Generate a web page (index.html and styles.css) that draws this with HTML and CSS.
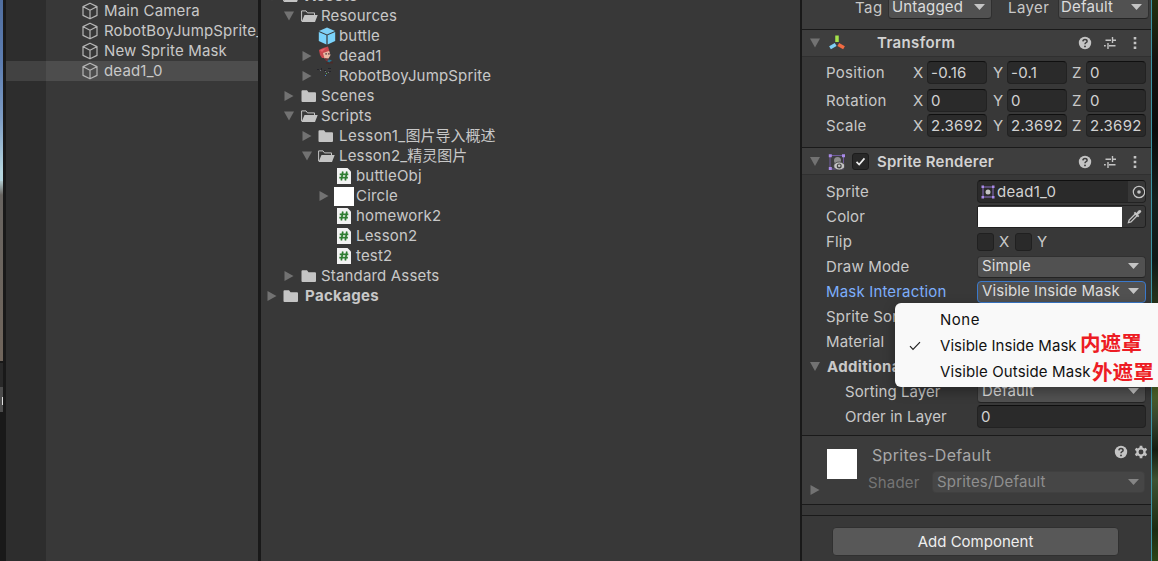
FILE: index.html
```html
<!DOCTYPE html>
<html lang="zh-CN">
<head>
<meta charset="utf-8">
<title>Unity Editor</title>
<link rel="stylesheet" href="styles.css">
</head>
<body>
<svg class="defs" aria-hidden="true">
  <symbol id="cube" viewBox="0 0 18 18"><path d="M9 1.2 16 4.6V13.4L9 16.8 2 13.4V4.6ZM2.3 4.8 9 8.2 15.7 4.8M9 8.2V16.6" fill="none" stroke="#b5b5b5" stroke-width="1.2" stroke-linejoin="round"/></symbol>
  <symbol id="prefab" viewBox="0 0 18 18"><path d="M9 .6 17 4 9 7.4 1 4Z" fill="#7fd0f5"/><path d="M.8 5.1 8.4 8.3V17.6L.8 14Z" fill="#7bd3fb"/><path d="M17.2 5.1 9.6 8.3V17.6L17.2 14Z" fill="#7bd3fb"/></symbol>
  <symbol id="folder" viewBox="0 0 18 16"><path d="M1.5 3.2q0-1 1-1H7l1.5 2h6.5q1 0 1 1V13q0 1-1 1H2.500q-1 0-1-1Z" fill="#c4c4c4"/></symbol>
  <symbol id="open" viewBox="0 0 18 16"><path d="M1.600 13V2.900H6l1.500 2h7V7" fill="none" stroke="#c4c4c4" stroke-width="1"/><path d="M4.500 7H17.700L15 14H1.500Z" fill="#c4c4c4"/></symbol>
  <symbol id="script" viewBox="0 0 16 18"><path d="M1 1H11.500L15 4.500V17H1Z" fill="#f2f2f2"/><path d="M6.800 4.500 5.300 13.500M10.800 4.500 9.300 13.500M3.700 7.300H12.300M3.300 10.700H11.900" stroke="#2f7d32" stroke-width="1.700" fill="none"/></symbol>
  <symbol id="help" viewBox="0 0 14 14"><circle cx="7" cy="7" r="6.200" fill="#c4c4c4"/><path d="M4.900 5.400Q5 3.500 7 3.500T9.100 5.200Q9.100 6.100 8 6.700 7 7.200 7 8.300" fill="none" stroke="#3e3e3e" stroke-width="1.500"/><circle cx="7" cy="10.400" r=".95" fill="#3e3e3e"/></symbol>
  <symbol id="preset" viewBox="0 0 14 14"><path d="M2.500 4.200H8M10 4.200H13M9.500 1V7M1 9.800H2.800M6 9.800H12.500M5 7V13" stroke="#c4c4c4" stroke-width="1.400" fill="none"/></symbol>
  <symbol id="dots" viewBox="0 0 6 14"><path d="M1.700 1h2.600v2.600H1.700ZM1.700 5.700h2.600v2.600H1.700ZM1.700 10.400h2.600V13H1.700Z" fill="#c4c4c4"/></symbol>
  <symbol id="gear" viewBox="0 0 14 14"><circle cx="7" cy="7" r="3.600" fill="none" stroke="#c4c4c4" stroke-width="2.300"/><path d="M7 .7V3M7 11v2.300M1.500 3.900l2 1.100M10.500 9l2 1.100M1.500 10.100l2-1.100M10.500 5l2-1.100" stroke="#c4c4c4" stroke-width="2.700"/></symbol>
</svg>

<div class="editor">
  <div class="scene-edge"><i class="scene-sky"></i><i class="scene-ground"></i><i class="scene-gap"></i><i class="scene-tab"><b></b></i></div>

  <div class="hierarchy">
    <div class="h-row"><svg><use href="#cube"/></svg>Main Camera</div>
    <div class="h-row"><svg><use href="#cube"/></svg>RobotBoyJumpSprite_0</div>
    <div class="h-row"><svg><use href="#cube"/></svg>New Sprite Mask</div>
    <div class="h-row selected"><svg><use href="#cube"/></svg>dead1_0</div>
  </div>

  <div class="project">
    <div class="row lv0 bold"><i class="arrow down"></i><span class="ico"><svg class="folder"><use href="#open"/></svg></span>Assets</div>
    <div class="row lv1"><i class="arrow down"></i><span class="ico"><svg class="folder"><use href="#open"/></svg></span>Resources</div>
    <div class="row lv2"><i class="arrow none"></i><span class="ico"><svg class="cube"><use href="#prefab"/></svg></span>buttle</div>
    <div class="row lv2"><i class="arrow"></i><span class="ico"><svg class="boy" viewBox="0 0 20 20"><path d="M3 4 7 2 12 .5 14 7 12 12H6L4 9Z" fill="#c9474d"/><path d="M4 4 10 2 6 6Z" fill="#e8606a"/><path d="M7 7 13 5 14.500 9 12.500 12.500H8.500Z" fill="#e9b7a3"/><path d="M9.500 7h1.200v1.800H9.500ZM12.300 7H13.500v1.800h-1.200Z" fill="#50373c"/><path d="M8.500 12 12 13 13 15 10 15Z" fill="#7d3037"/><path d="M12 13.500 15.500 14 15 16.500 11.500 16Z" fill="#29708b"/><path d="M10 16.500h3.500v1.500H10ZM14 15.500h3v2h-3Z" fill="#4a2b28"/></svg></span>dead1</div>
    <div class="row lv2"><i class="arrow"></i><span class="ico"><svg class="boy" viewBox="0 0 20 20"><path d="M1 3h2v1H1ZM5 2h1v2H5ZM8 4h2v1H8ZM12 2h3v1h-3ZM13 5h2v1h-2Z" fill="#24242b"/><path d="M4 4h1v1H4ZM9 5h1v1H9ZM12 6h1v1h-1Z" fill="#777a86"/><path d="M9 9h1v1H9Z" fill="#4f7bd0"/><path d="M10 7h1v1h-1Z" fill="#5cae62"/></svg></span>RobotBoyJumpSprite</div>
    <div class="row lv1"><i class="arrow"></i><span class="ico"><svg class="folder"><use href="#folder"/></svg></span>Scenes</div>
    <div class="row lv1"><i class="arrow down"></i><span class="ico"><svg class="folder"><use href="#open"/></svg></span>Scripts</div>
    <div class="row lv2"><i class="arrow"></i><span class="ico"><svg class="folder"><use href="#folder"/></svg></span><span class="lesson">Lesson1_</span><span class="cjk">图片导入概述</span></div>
    <div class="row lv2"><i class="arrow down"></i><span class="ico"><svg class="folder"><use href="#open"/></svg></span>Lesson2_<span class="cjk">精灵图片</span></div>
    <div class="row lv3"><i class="arrow none"></i><span class="ico"><svg class="script"><use href="#script"/></svg></span>buttleObj</div>
    <div class="row lv3"><i class="arrow"></i><span class="ico"><b class="swatch"></b></span>Circle</div>
    <div class="row lv3"><i class="arrow none"></i><span class="ico"><svg class="script"><use href="#script"/></svg></span>homework2</div>
    <div class="row lv3"><i class="arrow none"></i><span class="ico"><svg class="script"><use href="#script"/></svg></span>Lesson2</div>
    <div class="row lv3"><i class="arrow none"></i><span class="ico"><svg class="script"><use href="#script"/></svg></span>test2</div>
    <div class="row lv1"><i class="arrow"></i><span class="ico"><svg class="folder"><use href="#folder"/></svg></span>Standard Assets</div>
    <div class="row lv0 bold"><i class="arrow"></i><span class="ico"><svg class="folder"><use href="#folder"/></svg></span>Packages</div>
  </div>

  <div class="inspector">
    <div class="tagbar"><span class="tag-label">Tag</span><div class="drop tag">Untagged</div><span class="layer-label">Layer</span><div class="drop layer">Default</div></div>

    <div class="head">
      <i class="arrow down"></i>
      <svg class="comp" viewBox="0 0 20 20"><g stroke-width="3.500" stroke-linecap="butt"><path d="M10 2.500V9" stroke="#a5e34b"/><path d="M8.700 11.500 3 14.800" stroke="#7fcff5"/><path d="M11.300 11.500 17 14.800" stroke="#f26b42"/></g></svg>
      <span class="check none"></span>
      <span class="title">Transform</span>
      <svg class="t-help"><use href="#help"/></svg><svg class="t-preset"><use href="#preset"/></svg><svg class="t-dots"><use href="#dots"/></svg>
    </div>
    <div class="transform">
      <div class="vec pos"><label>Position</label><span>X</span><div class="field">-0.16</div><span>Y</span><div class="field">-0.1</div><span>Z</span><div class="field">0</div></div>
      <div class="vec rot"><label>Rotation</label><span>X</span><div class="field">0</div><span>Y</span><div class="field">0</div><span>Z</span><div class="field">0</div></div>
      <div class="vec"><label>Scale</label><span>X</span><div class="field">2.3692</div><span>Y</span><div class="field">2.3692</div><span>Z</span><div class="field">2.3692</div></div>
    </div>

    <div class="head second">
      <i class="arrow down"></i>
      <svg class="comp" viewBox="0 0 20 20"><path d="M3 3.500H16.500V17H3Z" fill="none" stroke="#6f5a9c"/><path d="M1.800 2.200h3v3h-3ZM15 2.200h3v3h-3ZM1.800 15h3v3h-3Z" fill="#a98be8"/><circle cx="10.500" cy="8.500" r="3.500" fill="#8e8e8e"/><ellipse cx="12.200" cy="14" rx="5.500" ry="4" fill="#c4c4c4" stroke="#3e3e3e" stroke-width=".8"/><circle cx="12.200" cy="14" r="2.500" fill="#444"/><circle cx="12.200" cy="13.800" r="1.300" fill="#c4c4c4"/></svg>
      <span class="check"><svg viewBox="0 0 17 17"><path d="M4 9 7 12 13 5" fill="none" stroke="#eee" stroke-width="1.900"/></svg></span>
      <span class="title">Sprite Renderer</span>
      <svg class="t-help"><use href="#help"/></svg><svg class="t-preset"><use href="#preset"/></svg><svg class="t-dots"><use href="#dots"/></svg>
    </div>
    <div class="renderer">
      <div class="prop"><label>Sprite</label><div class="field object"><svg class="sprite" viewBox="0 0 14 14"><path d="M2 2H12V12H2Z" fill="none" stroke="#8a6fc4"/><path d="M.5.500h2.500v2.500H.5ZM11 .5h2.500v2.500H11ZM.5 11h2.500v2.500H.5ZM11 11h2.500v2.500H11Z" fill="#a98be8"/><circle cx="7" cy="7" r="2.500" fill="#c4c4c4"/></svg>dead1_0<span class="picker"><svg viewBox="0 0 14 14"><circle cx="7" cy="7" r="5.700" fill="none" stroke="#c4c4c4" stroke-width="1.200"/><circle cx="7" cy="7" r="1.800" fill="#c4c4c4"/></svg></span></div></div>
      <div class="prop"><label>Color</label><div class="color"><b></b><svg viewBox="0 0 14 14"><path d="M1.300 12.700 2 10.300 7.700 4.600 9.400 6.300 3.700 12Z" fill="none" stroke="#c4c4c4" stroke-width="1.200"/><path d="M6.300 3.700 7.500 2.500 8.800 3.700 10.700 1.500Q12 .4 13 1.300T12.600 3.500L10.300 5.300 11.500 6.500 10.300 7.700Z" fill="#c4c4c4"/></svg></div></div>
      <div class="prop"><label>Flip</label><div class="flip"><i></i><span>X</span><i></i><span>Y</span></div></div>
      <div class="prop"><label>Draw Mode</label><div class="drop wide">Simple</div></div>
      <div class="prop focus"><label>Mask Interaction</label><div class="drop wide">Visible Inside Mask</div></div>
      <div class="prop"><label>Sprite Sort Point</label><div class="drop wide"></div></div>
      <div class="prop"><label>Material</label><div class="field wide"></div></div>
      <div class="prop section"><i class="arrow down"></i>Additional Settings</div>
      <div class="prop sub"><label>Sorting Layer</label><div class="drop wide">Default</div></div>
      <div class="prop sub"><label>Order in Layer</label><div class="field wide">0</div></div>
    </div>

    <div class="material">
      <i class="arrow"></i>
      <b class="preview"></b>
      <div class="mat-info">
        <div class="mat-title"><span>Sprites-Default</span><svg><use href="#help"/></svg><svg><use href="#gear"/></svg></div>
        <div class="mat-shader"><span>Shader</span><div class="drop">Sprites/Default</div></div>
      </div>
    </div>
    <div class="spacer"></div>
    <div class="footer"><div class="button">Add Component</div></div>
  </div>

  <div class="desktop"></div>
</div>

<div class="popup">
  <div class="item none-item">None</div>
  <div class="item"><svg viewBox="0 0 12 10"><path d="M1 5.200 4 8.300 11 1.200" fill="none" stroke="#222" stroke-width="1.200"/></svg>Visible Inside Mask<em class="note-in">内遮罩</em></div>
  <div class="item outside">Visible Outside Mask<em class="note-out">外遮罩</em></div>
</div>
</body>
</html>
```
FILE: styles.css
```css
* { box-sizing: border-box; }
body {
  margin: 0; width: 1158px; height: 561px; overflow: hidden; position: relative;
  background: #383838; color: #c8c8c8;
  font: 15px/20px Inter, "Noto Sans CJK SC", sans-serif; letter-spacing: .17px;
  white-space: nowrap;
}
svg { display: block; flex: none; }
.defs { position: absolute; width: 0; height: 0; }
.editor { display: flex; height: 561px; }

.scene-edge { width: 6px; flex: none; background: #191919; display: flex; flex-direction: column; align-items: flex-start; }
.scene-edge > i { width: 3px; flex: none; }
.scene-sky { height: 181px; background: linear-gradient(#506e9f, #5d7eb2 35%, #7d9cc4 65%, #b5d5de 95%); }
.scene-ground { height: 180px; background: linear-gradient(#b0c8cc, #686460 14px, #70655b); }
.scene-gap { height: 26px; background: linear-gradient(#191919 2px, #292929 2px); }
.scene-tab { height: 25px; background: #4c4c4c; padding: 10px 0 0 2px; }
.scene-tab b { display: block; width: 1px; height: 8px; background: #ddd; }

.hierarchy { width: 252px; flex: none; overflow: hidden; padding-top: 1px; background: linear-gradient(90deg, #2d2d2d 40px, #383838 40px); }
.h-row { height: 20px; display: flex; align-items: center; padding-left: 75px; gap: 5px; overflow: hidden; }
.h-row svg { width: 18px; height: 18px; }
.h-row.selected { background: linear-gradient(90deg, #424242 40px, #4d4d4d 40px); }

.project { width: 542px; flex: none; border-left: 3px solid #191919; padding-top: 6px; margin-top: -20px; height: 581px; }
.row { height: 20px; display: flex; align-items: center; }
.lv0 { padding-left: 6px; } .lv1 { padding-left: 23px; } .lv2 { padding-left: 41px; } .lv3 { padding-left: 58px; }
.lv0, .title, .section { letter-spacing: .35px; }
.bold { font-weight: 700; }
.arrow { width: 10px; height: 10px; flex: none; background: #727272; clip-path: polygon(5% 0, 95% 50%, 5% 100%); }
.arrow.down { clip-path: polygon(0 5%, 100% 5%, 50% 95%); }
.none { visibility: hidden; }
.ico { width: 20px; margin: 0 2px 0 5px; flex: none; display: flex; justify-content: center; align-items: center; height: 20px; }
.lv2 .ico { margin: 0 3px 0 4px; }
.lv0 .ico { margin: 0 4px 0 4px; }
.folder { width: 18px; height: 16px; }
.ico .cube { width: 18px; height: 18px; margin-right: -1px; }
.script { width: 16px; height: 18px; }
.boy { width: 20px; height: 20px; }
.swatch { width: 20px; height: 19px; background: #fff; }
.lesson { letter-spacing: .4px; }
.cjk { letter-spacing: 0; }

.inspector { width: 351px; flex: none; border-left: 2px solid #191919; background: #383838; }
.tagbar { height: 30px; border-bottom: 1px solid #1a1a1a; background: #3c3c3c; display: flex; align-items: flex-start; padding-left: 53px; }
.tagbar > span { margin-top: -2px; }
.tag-label { width: 33px; letter-spacing: .5px; }
.layer-label { width: 50px; margin-left: 16px; letter-spacing: .4px; }
.drop {
  height: 22px; background: #515151; border: 1px solid #303030; border-bottom-color: #242424; border-radius: 4px;
  display: flex; align-items: center; justify-content: space-between; padding: 0 6px 1px 4px; color: #dcdcdc; line-height: 20px;
}
.drop::after { content: ""; width: 11px; height: 6px; background: #c4c4c4; clip-path: polygon(0 0, 100% 0, 50% 100%); }
.tagbar .drop { margin-top: -3px; padding: 0 6px 2px 3px; }
.tag { width: 104px; }
.layer { width: 91px; }
.tagbar .layer { padding-left: 2px; }
.wide { width: 169px; flex: none; }

.head { height: 27px; background: #3e3e3e; border-bottom: 1px solid #303030; display: flex; align-items: center; padding-left: 8px; }
.head.second { padding-top: 1px; }
.comp { width: 20px; height: 20px; margin-left: 7px; }
.check { width: 17px; height: 17px; background: #282828; border: 1px solid #1c1c1c; border-radius: 3px; margin-left: 5px; }
.title { font-weight: 600; margin-left: 8px; width: 201px; color: #d2d2d2; }
.second .title { letter-spacing: .25px; }
.t-help { width: 14px; height: 14px; }
.t-preset { width: 14px; height: 14px; margin-left: 11px; }
.t-dots { width: 6px; height: 14px; margin-left: 15px; }

.transform { height: 91px; border-bottom: 1px solid #1a1a1a; padding: 4px 0 0 24px; }
.vec { display: flex; align-items: center; height: 23px; margin-bottom: 2px; }
.vec.pos { margin-bottom: 5px; }
.vec label { width: 86px; letter-spacing: .3px; }
.vec span { width: 15px; padding-left: 1px; }
.field {
  height: 23px; background: #2a2a2a; border: 1px solid #222; border-top-color: #0f0f0f; border-radius: 4px;
  padding-left: 3px; line-height: 22px; color: #d2d2d2; overflow: hidden; letter-spacing: .25px;
}
.vec .field { width: 60px; margin-right: 5px; padding-left: 3px; flex: none; }
.vec .field:nth-of-type(2) { margin-right: 4px; }
.vec .field:last-child { margin-right: 0; }

.renderer { height: 261px; border-bottom: 1px solid #1a1a1a; padding-top: 4px; }
.prop { height: 25px; display: flex; align-items: center; padding-left: 24px; }
.prop label { width: 151px; flex: none; letter-spacing: .17px; }
.prop.sub { padding-left: 43px; }
.prop.sub label { width: 132px; letter-spacing: .08px; }
.prop.section { padding-left: 8px; gap: 7px; font-weight: 700; }
.prop.focus label { color: #7daefb; }
.prop.focus .drop { border-color: #3a79cc; letter-spacing: .1px; }
.object { width: 169px; display: flex; align-items: center; }
.sprite { width: 14px; height: 14px; margin-right: 2px; }
.picker { width: 17px; height: 21px; background: #373737; margin-left: auto; display: flex; align-items: center; justify-content: flex-end; }
.picker svg { width: 14px; height: 14px; margin-right: -1px; }
.color { width: 169px; height: 23px; border: 1px solid #202020; border-radius: 3px; display: flex; align-items: center; }
.color b { width: 144px; height: 20px; background: #fff; }
.color svg { width: 15px; height: 15px; margin-left: 5px; }
.flip { display: flex; align-items: center; }
.flip i { width: 17px; height: 18px; background: #2a2a2a; border: 1px solid #202020; border-radius: 3px; }
.flip span { width: 16px; margin-left: 5px; }

.material { height: 69px; background: #3c3c3c; border-bottom: 1px solid #1a1a1a; display: flex; padding-left: 8px; }
.material > .arrow { margin-top: 49px; }
.preview { width: 30px; height: 30px; background: #fff; margin: 13px 1px 0 7px; flex: none; }
.mat-info { margin-left: 10px; flex: 1; }
.mat-title { display: flex; height: 29px; padding: 9px 0 0 4px; align-items: flex-start; color: #a8a8a8; }
.mat-title span { width: 242px; font-size: 16px; letter-spacing: .3px; }
.mat-title svg { width: 14px; height: 14px; }
.mat-title svg + svg { margin-left: 6px; }
.mat-shader { display: flex; align-items: center; margin-top: 6px; color: #757575; height: 22px; }
.mat-shader > span { width: 64px; padding-top: 2px; }
.mat-shader .drop { width: 213px; background: #464646; border-color: #404040; color: #8f8f8f; padding: 0 5px 0 4px; }
.mat-shader .drop::after { background: #858585; }
.spacer { height: 11px; border-bottom: 1px solid #1a1a1a; }
.footer { padding: 11px 0 0 30px; }
.button { width: 287px; height: 29px; background: #585858; border: 1px solid #303030; border-radius: 4px; text-align: center; line-height: 28px; color: #eee; letter-spacing: 0; }

.desktop {
  flex: none; width: 7px; border-left: 1px solid #3c93a3;
  background: linear-gradient(#22300f, #151310 60px, #0b0b0b 130px, #15201d 200px, #101817 260px, #26331c 300px, #536b28 385px, #35432e 420px, #151c10 450px, #3d5232 480px, #1c2b12 530px, #2c4517);
}

.popup {
  position: absolute; left: 895px; top: 303px; width: 270px; height: 84px; padding-top: 4px;
  background: #f9f9f9; border-radius: 6px; color: #111; box-shadow: 0 4px 12px rgba(0,0,0,.35);
}
.item { height: 26px; line-height: 26px; padding-left: 45px; position: relative; letter-spacing: .03px; }
.none-item { letter-spacing: .5px; }
.outside { letter-spacing: .12px; }
.item svg { position: absolute; left: 14px; top: 8px; width: 12px; height: 10px; }
.item em { position: absolute; font: 700 20.600px/26px "Noto Sans CJK SC", sans-serif; letter-spacing: 0; color: #ed1c24; }
.note-in { left: 185px; top: -4px; }
.note-out { left: 197px; top: -1px; }
```
